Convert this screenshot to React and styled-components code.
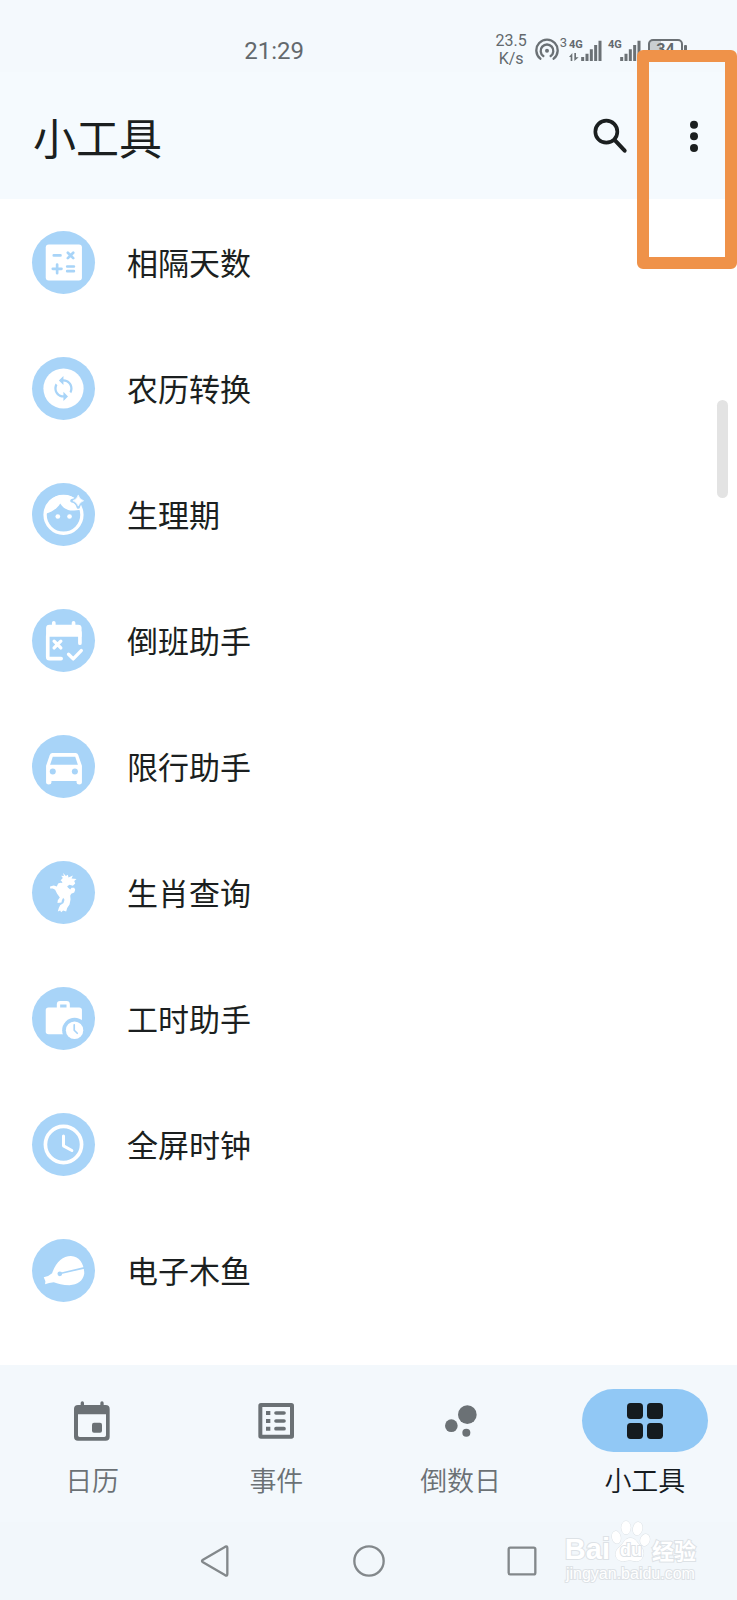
import React from 'react'
import styled, { createGlobalStyle } from 'styled-components'

const TINT = '#a8d4f8'
const GREY = '#6b7175'
const INK = '#1b1f20'

const tools = [
  { name: '相隔天数', icon: <CalculatorIcon /> },
  { name: '农历转换', icon: <ConvertIcon /> },
  { name: '生理期', icon: <FaceIcon /> },
  { name: '倒班助手', icon: <ShiftIcon /> },
  { name: '限行助手', icon: <CarIcon /> },
  { name: '生肖查询', icon: <DragonIcon /> },
  { name: '工时助手', icon: <BriefcaseIcon /> },
  { name: '全屏时钟', icon: <ClockIcon /> },
  { name: '电子木鱼', icon: <WoodfishIcon /> },
]

const tabs = [
  { name: '日历', icon: <CalendarTabIcon /> },
  { name: '事件', icon: <EventsTabIcon /> },
  { name: '倒数日', icon: <BubblesTabIcon /> },
  { name: '小工具', icon: <GridTabIcon />, active: true },
]

const App = () => {
  return (
    <Screen>
      <GlobalStyle />
      <StatusBar>
        <Clock>21:29</Clock>
        <StatusIcons>
          <Speed>
            <span>23.5</span>
            <span>K/s</span>
          </Speed>
          <Hotspot>
            <HotspotIcon />
            <Count>3</Count>
          </Hotspot>
          <Signal>
            <Network>
              <span>4G</span>
              <svg width="10" height="8" viewBox="0 0 30 24" fill={GREY}>
                <path d="M10 24V0L0 12h5v12zM16 0v24l13-11h-8V0z" />
              </svg>
            </Network>
            <BarsIcon />
          </Signal>
          <Signal $wide>
            <Network>
              <span>4G</span>
            </Network>
            <BarsIcon />
          </Signal>
          <Battery>34</Battery>
        </StatusIcons>
      </StatusBar>

      <Header>
        <Title>小工具</Title>
        <Actions>
          <IconButton aria-label="搜索">
            <svg width="36" height="36" viewBox="0 0 108 108" fill="none" stroke={INK}>
              <circle cx="43" cy="41" r="33" strokeWidth="11" />
              <path d="M69 67L98 98" strokeWidth="12" strokeLinecap="round" />
            </svg>
          </IconButton>
          <IconButton aria-label="更多">
            <svg width="36" height="36" viewBox="0 0 108 108" fill={INK}>
              <circle cx="54" cy="20" r="12" />
              <circle cx="54" cy="55" r="12" />
              <circle cx="54" cy="90" r="12" />
            </svg>
          </IconButton>
        </Actions>
      </Header>

      <Main>
        <ToolList>
          {tools.map((tool) => (
            <li key={tool.name}>
              <ToolButton>
                <Medallion>{tool.icon}</Medallion>
                {tool.name}
              </ToolButton>
            </li>
          ))}
        </ToolList>
        <ScrollThumb />
      </Main>

      <TabBar>
        {tabs.map((tab) => (
          <Tab key={tab.name} $active={tab.active} aria-current={tab.active ? 'page' : undefined}>
            <Pill $active={tab.active}>{tab.icon}</Pill>
            {tab.name}
          </Tab>
        ))}
      </TabBar>

      <SystemBar>
        <SystemButton aria-label="返回">
          <svg width="34" height="34" viewBox="0 0 102 102">
            <path d="M12 47L79 8Q85 5 85 12V90Q85 97 79 94L12 55Q6 51 12 47Z" />
          </svg>
        </SystemButton>
        <SystemButton aria-label="主页">
          <svg width="34" height="34" viewBox="0 0 102 102">
            <circle cx="51" cy="51" r="44" />
          </svg>
        </SystemButton>
        <SystemButton aria-label="最近任务">
          <svg width="34" height="34" viewBox="0 0 102 102">
            <rect x="11" y="11" width="80" height="80" rx="5" />
          </svg>
        </SystemButton>
      </SystemBar>

      <Highlight />
      <Watermark>
        <Brand>
          <Latin>Bai</Latin>
          <Paw>
            <PawIcon />
            <PawText>du</PawText>
          </Paw>
          <Han>经验</Han>
        </Brand>
        <Site>jingyan.baidu.com</Site>
      </Watermark>
    </Screen>
  )
}

/* icons inside the round medallions, 188 units across */

function Glyph({ children }) {
  return (
    <svg width="100%" height="100%" viewBox="0 0 188 188" fill="#fff" strokeLinecap="round" strokeLinejoin="round">
      {children}
    </svg>
  )
}

function CalculatorIcon() {
  return (
    <Glyph>
      <rect x="41" y="40" width="108" height="108" rx="9" />
      <path
        d="M65 73H85M107 65L123 81M123 65L107 81M62 113H88M75 100V126M105 106H125M105 120H125"
        stroke={TINT}
        strokeWidth="8"
      />
    </Glyph>
  )
}

function ConvertIcon() {
  return (
    <Glyph>
      <circle cx="94" cy="94" r="60" />
      <path
        transform="translate(53 53) scale(3.4)"
        fill={TINT}
        d="M12 4V1L8 5l4 4V6c3.31 0 6 2.69 6 6 0 1.01-.25 1.97-.7 2.8l1.46 1.46C19.54 15.03 20 13.57 20 12c0-4.42-3.58-8-8-8zm0 14c-3.31 0-6-2.69-6-6 0-1.01.25-1.97.7-2.8L5.24 7.74C4.46 8.97 4 10.43 4 12c0 4.42 3.58 8 8 8v3l4-4-4-4v3z"
      />
    </Glyph>
  )
}

function FaceIcon() {
  return (
    <Glyph>
      <circle cx="94" cy="95" r="55" fill="none" stroke="#fff" strokeWidth="10" />
      <path d="M40 92C60 86 76 76 84 61C94 76 108 84 126 82L148 80C142 54 122 36 94 36C62 36 38 60 40 92Z" />
      <circle cx="77" cy="100" r="7" />
      <circle cx="112" cy="100" r="7" />
      <path
        d="M138 34Q141 50 157 53Q141 56 138 72Q135 56 119 53Q135 50 138 34Z"
        fill={TINT}
        stroke={TINT}
        strokeWidth="10"
      />
      <path d="M138 37Q142 49 154 53Q142 57 138 69Q134 57 122 53Q134 49 138 37Z" stroke="#fff" strokeWidth="2" />
    </Glyph>
  )
}

function ShiftIcon() {
  return (
    <Glyph>
      <path d="M42 83V57Q42 47 52 47H138Q148 47 148 57V83Z" />
      <path
        d="M65 41V50M124 41V50M47 80V143Q47 148 52 148H87M143 70V102"
        fill="none"
        stroke="#fff"
        strokeWidth="11"
      />
      <path d="M66 96L86 116M86 96L66 116M109 135L123 149L147 124" fill="none" stroke="#fff" strokeWidth="10" />
    </Glyph>
  )
}

function CarIcon() {
  return (
    <Glyph>
      <path
        fillRule="evenodd"
        d="M61 54H130Q136 54 138 60L149 92V142Q149 148 141 148Q133 148 133 142V137H58V142Q58 148 50 148Q42 148 42 142V92L53 60Q55 54 61 54ZM62 65L54 89H137L129 65Z"
      />
      <circle cx="62" cy="109" r="9" fill={TINT} />
      <circle cx="128" cy="109" r="9" fill={TINT} />
    </Glyph>
  )
}

function DragonIcon() {
  return (
    <Glyph>
      <path
        transform="translate(-34 -420)"
        d="M127 456L135 465L141 461L143 469L156 463L152 472L167 474L160 480L163 487L156 494L146 491L139 495L141 499L148 505L152 500L160 500L163 506L160 514L151 518L148 524L149 535L146 550L139 560L136 571L127 568L121 573L118 568L111 571L114 560L118 552L128 545L131 536L127 530L123 538L122 544L110 545L111 537L117 529L109 518L103 506L96 502L88 502L88 496L99 493L108 496L112 487L119 485L125 486L122 480L119 478L126 471L121 464L129 465Z"
      />
    </Glyph>
  )
}

function BriefcaseIcon() {
  return (
    <Glyph>
      <rect x="41" y="61" width="108" height="80" rx="8" />
      <path d="M79 62V52Q79 47 84 47H103Q108 47 108 52V62" fill="none" stroke="#fff" strokeWidth="10" />
      <circle cx="127" cy="129" r="37" fill={TINT} />
      <circle cx="127" cy="129" r="26" />
      <path d="M126 113V129L135 138" fill="none" stroke={TINT} strokeWidth="5" />
    </Glyph>
  )
}

function ClockIcon() {
  return (
    <Glyph>
      <circle cx="94" cy="94" r="54" fill="none" stroke="#fff" strokeWidth="11" />
      <path d="M94 69V98L119 112" fill="none" stroke="#fff" strokeWidth="9" />
    </Glyph>
  )
}

function WoodfishIcon() {
  return (
    <Glyph>
      <path d="M35 114Q52 110 60 102C72 68 92 51 116 51C144 52 156 78 156 104C152 126 136 137 112 138C92 138 76 132 65 129Q50 130 39 135L40 126Z" />
      <circle cx="83" cy="104" r="7" fill={TINT} />
      <path d="M84 103L156 86" stroke={TINT} strokeWidth="5" />
    </Glyph>
  )
}

/* bottom tab icons */

function TabGlyph({ children }) {
  return (
    <svg width="40" height="40" viewBox="0 0 120 120" fill="currentColor" strokeLinecap="round">
      {children}
    </svg>
  )
}

function CalendarTabIcon() {
  return (
    <TabGlyph>
      <path
        fillRule="evenodd"
        d="M18 12H101Q113 12 113 24V107Q113 119 101 119H18Q6 119 6 107V24Q6 12 18 12ZM18 40V103Q18 108 23 108H97Q102 108 102 103V40Z"
      />
      <path d="M31 6V16M90 6V16" stroke="currentColor" strokeWidth="10" />
      <rect x="60" y="65" width="30" height="30" rx="6" />
    </TabGlyph>
  )
}

function EventsTabIcon() {
  return (
    <TabGlyph>
      <rect x="13" y="12" width="95" height="95" rx="2" fill="none" stroke="currentColor" strokeWidth="12" />
      <path d="M30 30h13v12H30zM30 54h13v12H30zM30 77h13v12H30z" />
      <path d="M60 36H84M60 60H84M60 83H84" stroke="currentColor" strokeWidth="11" />
    </TabGlyph>
  )
}

function BubblesTabIcon() {
  return (
    <TabGlyph>
      <circle cx="79" cy="41" r="28" />
      <circle cx="31" cy="74" r="19" />
      <circle cx="76" cy="95" r="12" />
    </TabGlyph>
  )
}

function GridTabIcon() {
  return (
    <TabGlyph>
      <rect x="6" y="6" width="48" height="48" rx="11" />
      <rect x="66" y="6" width="48" height="48" rx="11" />
      <rect x="6" y="66" width="48" height="48" rx="11" />
      <rect x="66" y="66" width="48" height="48" rx="11" />
    </TabGlyph>
  )
}

/* status bar drawings */

function HotspotIcon() {
  return (
    <svg width="24" height="24" viewBox="0 0 72 72" fill="none" stroke={GREY} strokeWidth="7" strokeLinecap="round">
      <circle cx="36" cy="38" r="6" fill={GREY} stroke="none" />
      <path d="M25 54A19 19 0 1 1 47 54" />
      <path d="M16 62A32 32 0 1 1 56 62" />
    </svg>
  )
}

function BarsIcon() {
  return (
    <svg width="21" height="21" viewBox="0 0 63 63" stroke={GREY} strokeWidth="9">
      <path d="M5 63V51M18 63V41M31 63V28M44 63V15M57 63V2" />
    </svg>
  )
}

function PawIcon() {
  return (
    <svg width="40" height="44" viewBox="0 0 120 132" fill="#fff" stroke="#dde2e6" strokeWidth="3">
      <ellipse cx="16" cy="52" rx="13" ry="19" transform="rotate(-12 16 52)" />
      <ellipse cx="45" cy="23" rx="14" ry="20" />
      <ellipse cx="80" cy="26" rx="14" ry="20" transform="rotate(12 80 26)" />
      <ellipse cx="102" cy="60" rx="14" ry="18" transform="rotate(18 102 60)" />
      <path d="M58 54C74 54 78 68 90 80C104 94 98 124 76 124C66 124 62 121 56 121C48 121 40 126 30 123C8 116 10 92 26 80C38 70 42 54 58 54Z" />
    </svg>
  )
}

const GlobalStyle = createGlobalStyle`
  body {
    margin: 0;
    background: #fff;
    font-family: "Noto Sans CJK SC", sans-serif;
  }
  button {
    border: 0;
    padding: 0;
    background: none;
    font-family: inherit;
    cursor: pointer;
  }
  svg {
    display: block;
  }
`

const Screen = styled.div`
  position: relative;
  display: flex;
  flex-direction: column;
  min-height: 100vh;
  overflow: hidden;
`

const StatusBar = styled.div`
  display: flex;
  align-items: flex-end;
  justify-content: space-between;
  box-sizing: border-box;
  height: 72px;
  padding: 0 54px 4px 33%;
  background: #f4f9fd;
  color: #63696d;
  font-family: Roboto, sans-serif;
`

const Clock = styled.time`
  margin-left: 1px;
  font-size: 24px;
  line-height: 34px;
`

const StatusIcons = styled.div`
  display: flex;
  align-items: center;
  height: 36px;
`

const Speed = styled.div`
  display: flex;
  flex-direction: column;
  align-items: center;
  margin-right: 8px;
  font-size: 16px;
  line-height: 18px;
`

const Hotspot = styled.div`
  display: flex;
  align-items: flex-start;
`

const Count = styled.span`
  margin: 0 2px 0 1px;
  font-size: 13px;
  line-height: 10px;
`

const Signal = styled.div`
  display: flex;
  align-items: flex-end;
  margin-right: ${(props) => (props.$wide ? '7px' : '6px')};
`

const Network = styled.div`
  display: flex;
  flex-direction: column;
  justify-content: space-between;
  width: 12px;
  height: 21px;
  font-size: 11px;
  font-weight: 700;
  line-height: 10px;
`

const Battery = styled.div`
  position: relative;
  width: 31px;
  height: 18px;
  border: 2px solid ${GREY};
  border-radius: 5px;
  background: linear-gradient(90deg, #c9ced1 34%, transparent 34%);
  font-size: 16px;
  font-weight: 700;
  line-height: 18px;
  text-align: center;

  &::after {
    content: '';
    position: absolute;
    top: 4px;
    right: -6px;
    width: 3px;
    height: 9px;
    border-radius: 1px;
    background: ${GREY};
  }
`

const Header = styled.header`
  display: flex;
  align-items: center;
  justify-content: space-between;
  height: 127px;
  padding: 0 13px 0 33px;
  background: #f5fafe;
`

const Title = styled.h1`
  margin: 0;
  color: ${INK};
  font-size: 43px;
  font-weight: 400;
  line-height: 60px;
`

const Actions = styled.div`
  display: flex;
  gap: 24px;
`

const IconButton = styled.button`
  display: grid;
  place-items: center;
  width: 60px;
  height: 60px;
`

const Main = styled.main`
  position: relative;
  flex: 1;
  padding-bottom: 32px;
`

const ToolList = styled.ul`
  margin: 0;
  padding: 0;
  list-style: none;
`

const ToolButton = styled.button`
  display: flex;
  align-items: center;
  gap: 32px;
  width: 100%;
  height: 126px;
  padding: 0 32px;
  color: ${INK};
  font-size: 31px;
  line-height: 44px;
  text-align: left;
`

const Medallion = styled.span`
  width: 63px;
  height: 63px;
  border-radius: 50%;
  background: ${TINT};
`

const ScrollThumb = styled.div`
  position: absolute;
  top: 201px;
  right: 9px;
  width: 11px;
  height: 98px;
  border-radius: 6px;
  background: #e3e3e3;
`

const TabBar = styled.nav`
  display: grid;
  grid-template-columns: repeat(4, 1fr);
  padding: 24px 0;
  background: #f3f8fc;
`

const Tab = styled.button`
  display: flex;
  flex-direction: column;
  align-items: center;
  gap: 10px;
  color: ${(props) => (props.$active ? '#151b1f' : GREY)};
  font-size: 27px;
  font-weight: 350;
  line-height: 36px;
`

const Pill = styled.span`
  display: grid;
  place-items: center;
  width: 126px;
  height: 63px;
  border-radius: 32px;
  background: ${(props) => (props.$active ? '#91c8f5' : 'transparent')};
`

const SystemBar = styled.div`
  display: flex;
  align-items: center;
  justify-content: center;
  gap: 93px;
  height: 78px;
  background: #f2f7fb;
`

const SystemButton = styled.button`
  display: grid;
  place-items: center;
  width: 60px;
  height: 60px;

  svg {
    fill: none;
    stroke: #83888b;
    stroke-width: 7;
  }
`

const Highlight = styled.div`
  position: absolute;
  top: 50px;
  right: 0;
  box-sizing: border-box;
  width: 100px;
  height: 219px;
  border: 12px solid #ef9249;
  border-radius: 6px;
  pointer-events: none;
`

const Watermark = styled.div`
  position: absolute;
  right: 41px;
  bottom: 16px;
  color: #fff;
  -webkit-text-stroke: 2px #dde2e6;
  paint-order: stroke fill;
  pointer-events: none;
`

const Brand = styled.div`
  display: flex;
  align-items: flex-end;
  height: 46px;
`

const Latin = styled.span`
  font-family: "Liberation Sans", sans-serif;
  font-size: 29px;
  font-weight: 700;
  line-height: 30px;
`

const Paw = styled.span`
  position: relative;
  margin: 0 1px;
`

const PawText = styled.span`
  position: absolute;
  right: 0;
  bottom: 4px;
  left: 0;
  font-family: "Liberation Sans", sans-serif;
  font-size: 18px;
  font-weight: 700;
  line-height: 20px;
  text-align: center;
`

const Han = styled.span`
  font-size: 22px;
  font-weight: 700;
  line-height: 30px;
`

const Site = styled.div`
  font-family: "Liberation Sans", sans-serif;
  font-size: 16px;
  line-height: 20px;
  text-align: center;
`

export default App
